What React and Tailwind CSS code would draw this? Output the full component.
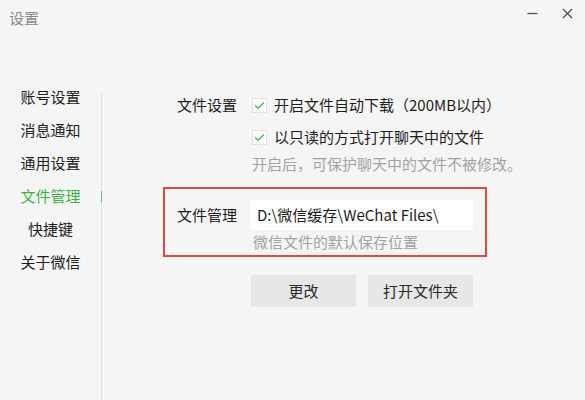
export default function App() {
  const menu = ['账号设置', '消息通知', '通用设置', '文件管理', '快捷键', '关于微信']
  const font = { fontFamily: '"Noto Sans CJK SC", "Noto Sans", sans-serif' }

  return (
    <div
      className="w-[585px] h-[400px] bg-[#f5f5f5] flex flex-col overflow-hidden text-[15px] text-[#1d1d1d]"
      style={font}
    >
      {/* title bar */}
      <div className="h-[36px] flex items-start justify-between shrink-0">
        <div className="pl-[9px] pt-[7px] text-[15px] leading-[22px] text-[#8a8a8a]">设置</div>
        <div className="flex items-center gap-[24px] pr-[12px] pt-[8px]">
          <svg width="11" height="11" viewBox="0 0 11 11">
            <path d="M0.5 5.5h10" stroke="#555" strokeWidth="1.3" />
          </svg>
          <svg width="11" height="11" viewBox="0 0 11 11">
            <path d="M1 1l9 9M10 1l-9 9" stroke="#444" strokeWidth="1.1" />
          </svg>
        </div>
      </div>

      <div className="flex flex-1 min-h-0">
        {/* sidebar */}
        <div className="w-[101px] shrink-0 pt-[44px] flex flex-col items-center">
          {menu.map((m) => (
            <div
              key={m}
              className={
                'h-[33px] leading-[33px] ' + (m === '文件管理' ? 'text-[#3eb04b]' : 'text-[#1d1d1d]')
              }
            >
              {m}
            </div>
          ))}
        </div>

        {/* divider */}
        <div className="w-px mt-[56px] bg-[#e4e4e4] relative shrink-0">
          <div className="absolute left-0 top-[99px] w-px h-[11px] bg-[#62c16b]"></div>
        </div>

        {/* content */}
        <div className="flex-1 pl-[61px] pt-[55px] flex flex-col">
          <div className="flex">
            <div className="w-[89px] pl-[14px] leading-[28px]">文件设置</div>
            <div className="flex flex-col">
              <div className="flex items-center gap-[7px] h-[28px]">
                <Check />
                <span>开启文件自动下载（200MB以内）</span>
              </div>
              <div className="flex items-center gap-[7px] h-[28px] mt-[4px]">
                <Check />
                <span>以只读的方式打开聊天中的文件</span>
              </div>
              <div className="h-[26px] leading-[26px] text-[#a3a3a3]">开启后，可保护聊天中的文件不被修改。</div>
            </div>
          </div>

          <div className="mt-[10px] w-[324px] h-[70px] border-2 border-[#dc4a42] flex pt-[11px]">
            <div className="w-[85px] pl-[12px] leading-[29px]">文件管理</div>
            <div className="flex flex-col">
              <div className="w-[223px] h-[30px] bg-white pl-[7px] leading-[30px] whitespace-nowrap">
                D:\微信缓存\WeChat Files\
              </div>
              <div className="pl-[3px] leading-[24px] text-[#a3a3a3]">微信文件的默认保存位置</div>
            </div>
          </div>

          <div className="flex gap-[12px] mt-[18px] pl-[88px]">
            <div className="w-[105px] h-[32px] bg-[#e7e7e7] flex items-center justify-center text-[#2a2a2a]">更改</div>
            <div className="w-[105px] h-[32px] bg-[#e7e7e7] flex items-center justify-center text-[#2a2a2a]">打开文件夹</div>
          </div>
        </div>
      </div>
    </div>
  )
}

function Check() {
  return (
    <div className="w-[15px] h-[15px] bg-white border border-[#e2e2e2] flex items-center justify-center">
      <svg width="11" height="9" viewBox="0 0 11 9">
        <path d="M1 4.5l3 3L10 1.5" fill="none" stroke="#3eb04b" strokeWidth="1.1" />
      </svg>
    </div>
  )
}
